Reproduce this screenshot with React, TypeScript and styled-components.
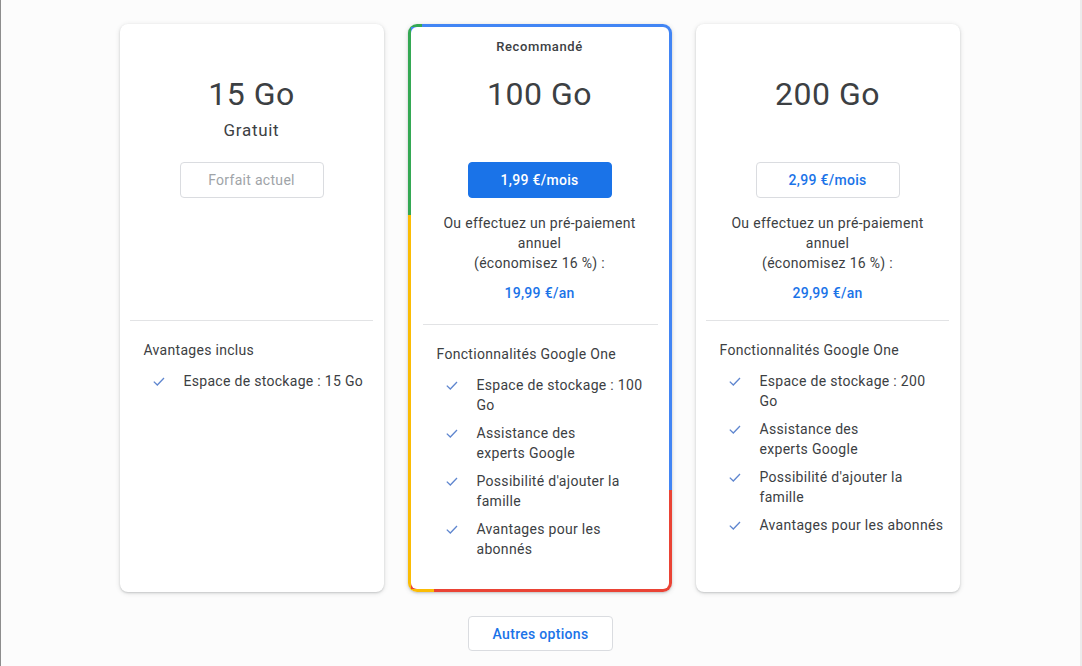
import React from "react";
import styled, { createGlobalStyle } from "styled-components";

const GlobalStyle = createGlobalStyle`
  html, body { margin: 0; padding: 0; background: #fcfcfc; }
  body {
    font-family: Roboto, "Liberation Sans", Arial, sans-serif;
    color: #3c4043;
    letter-spacing: 0.3px;
    -webkit-font-smoothing: antialiased;
  }
  * { box-sizing: border-box; }
`;

const Page = styled.main`
  min-height: 666px;
  border-left: 1px solid #8d8d8d;
  border-right: 2px solid #ececec;
  padding-top: 24px;
  display: flex;
  flex-direction: column;
  align-items: center;
`;

const Plans = styled.div`
  display: grid;
  grid-template-columns: repeat(3, 264px);
  column-gap: 24px;
  height: 568px;
  margin-right: 2px;
`;

const Card = styled.section<{ $featured?: boolean }>`
  display: flex;
  flex-direction: column;
  border-radius: ${(p) => (p.$featured ? 9 : 8)}px;
  box-shadow: 0 1px 2px rgba(60, 64, 67, 0.22), 0 1px 4px 1px rgba(60, 64, 67, 0.1);
  background: #fff;
  ${(p) =>
    p.$featured &&
    `
    border: 3px solid transparent;
    background:
      linear-gradient(#fff, #fff) padding-box,
      linear-gradient(#34a853, #34a853) left top / 14px 3px no-repeat border-box,
      linear-gradient(to bottom, #34a853 191px, #fbbc04 191px) left top / 3px 100% no-repeat border-box,
      linear-gradient(#fbbc04, #fbbc04) left bottom / 26px 3px no-repeat border-box,
      linear-gradient(to bottom, #4285f4 466px, #ea4335 466px) right top / 3px 100% no-repeat border-box,
      linear-gradient(to bottom, #4285f4 50%, #ea4335 50%) border-box;
  `}
`;

const Top = styled.div<{ $featured?: boolean }>`
  height: ${(p) => (p.$featured ? 297 : 296)}px;
  padding-top: ${(p) => (p.$featured ? 10 : 13)}px;
  display: flex;
  flex-direction: column;
  align-items: center;
  text-align: center;
`;

const Label = styled.div`
  height: 20px;
  line-height: 20px;
  font-size: 13px;
  font-weight: 500;
  letter-spacing: 0.6px;
  color: #3c4043;
`;

const Title = styled.h2`
  margin: 17px 0 0;
  font-size: 32px;
  line-height: 40px;
  font-weight: 400;
  letter-spacing: 0.5px;
  color: #3c4043;
`;

const Subtitle = styled.div`
  margin-top: 4px;
  height: 24px;
  line-height: 24px;
  font-size: 17px;
  letter-spacing: 0.7px;
  color: #3c4043;
`;

type Variant = "current" | "primary" | "outline";

const PriceButton = styled.button<{ $variant: Variant }>`
  margin-top: 20px;
  width: 144px;
  height: 36px;
  border-radius: 4px;
  font-family: inherit;
  font-size: 14px;
  letter-spacing: 0.3px;
  cursor: pointer;
  border: 1px solid ${(p) => (p.$variant === "primary" ? "#1a73e8" : "#dadce0")};
  background: ${(p) => (p.$variant === "primary" ? "#1a73e8" : "#fff")};
  color: ${(p) =>
    p.$variant === "primary" ? "#fff" : p.$variant === "outline" ? "#1a73e8" : "#a0a4a8"};
  font-weight: ${(p) => (p.$variant === "current" ? 400 : 500)};
`;

const Prepaid = styled.p`
  margin: 15px 0 0;
  font-size: 14px;
  line-height: 20px;
  color: #3c4043;
`;

const Annual = styled.div`
  margin-top: 10px;
  font-size: 14px;
  line-height: 20px;
  font-weight: 500;
  color: #1a73e8;
`;

const Divider = styled.hr<{ $featured?: boolean }>`
  margin: 0 11px 0 ${(p) => (p.$featured ? 12 : 10)}px;
  border: 0;
  height: 1px;
  background: #e2e3e5;
`;

const Bottom = styled.div<{ $featured?: boolean }>`
  padding: 19px 10px 0 ${(p) => (p.$featured ? 26 : 24)}px;
`;

const SectionTitle = styled.div`
  font-size: 14px;
  line-height: 20px;
  color: #3c4043;
`;

const FeatureList = styled.ul`
  list-style: none;
  margin: 11px 0 0;
  padding: 0 0 0 9px;
  display: flex;
  flex-direction: column;
  gap: 8px;
`;

const Feature = styled.li`
  display: flex;
  align-items: flex-start;
  gap: 19px;
  font-size: 14px;
  line-height: 20px;
  color: #3c4043;
  white-space: nowrap;
`;

const Check = styled.svg`
  flex: none;
  width: 12px;
  height: 20px;
`;

const MoreButton = styled.button`
  margin-top: 24px;
  width: 145px;
  height: 35px;
  border: 1px solid #dadce0;
  border-radius: 4px;
  background: #fff;
  color: #1a73e8;
  font-family: inherit;
  font-size: 14px;
  font-weight: 500;
  letter-spacing: 0.3px;
  cursor: pointer;
`;

const CheckIcon = () => (
  <Check viewBox="0 0 12 20" aria-hidden="true">
    <path d="M0.8 10.6 L4.3 14 L11 7" fill="none" stroke="#5f86cf" strokeWidth="1.3" />
  </Check>
);

type Plan = {
  label?: string;
  title: string;
  subtitle?: string;
  button: string;
  variant: Variant;
  annual?: string;
  section: string;
  features: string[][];
  featured?: boolean;
};

const plans: Plan[] = [
  {
    title: "15 Go",
    subtitle: "Gratuit",
    button: "Forfait actuel",
    variant: "current",
    section: "Avantages inclus",
    features: [["Espace de stockage : 15 Go"]],
  },
  {
    label: "Recommandé",
    title: "100 Go",
    button: "1,99 €/mois",
    variant: "primary",
    annual: "19,99 €/an",
    section: "Fonctionnalités Google One",
    featured: true,
    features: [
      ["Espace de stockage : 100", "Go"],
      ["Assistance des", "experts Google"],
      ["Possibilité d'ajouter la", "famille"],
      ["Avantages pour les", "abonnés"],
    ],
  },
  {
    title: "200 Go",
    button: "2,99 €/mois",
    variant: "outline",
    annual: "29,99 €/an",
    section: "Fonctionnalités Google One",
    features: [
      ["Espace de stockage : 200", "Go"],
      ["Assistance des", "experts Google"],
      ["Possibilité d'ajouter la", "famille"],
      ["Avantages pour les abonnés"],
    ],
  },
];

const PlanCard = ({ plan }: { plan: Plan }) => (
  <Card $featured={plan.featured}>
    <Top $featured={plan.featured}>
      <Label>{plan.label ?? ""}</Label>
      <Title>{plan.title}</Title>
      <Subtitle>{plan.subtitle ?? ""}</Subtitle>
      <PriceButton $variant={plan.variant}>{plan.button}</PriceButton>
      {plan.annual && (
        <>
          <Prepaid>
            Ou effectuez un pré-paiement
            <br />
            annuel
            <br />
            (économisez 16 %) :
          </Prepaid>
          <Annual>{plan.annual}</Annual>
        </>
      )}
    </Top>
    <Divider $featured={plan.featured} />
    <Bottom $featured={plan.featured}>
      <SectionTitle>{plan.section}</SectionTitle>
      <FeatureList>
        {plan.features.map((lines, i) => (
          <Feature key={i}>
            <CheckIcon />
            <span>
              {lines.map((l, j) => (
                <React.Fragment key={j}>
                  {j > 0 && <br />}
                  {l}
                </React.Fragment>
              ))}
            </span>
          </Feature>
        ))}
      </FeatureList>
    </Bottom>
  </Card>
);

export default function App() {
  return (
    <>
      <GlobalStyle />
      <Page>
        <Plans>
          {plans.map((p) => (
            <PlanCard key={p.title} plan={p} />
          ))}
        </Plans>
        <MoreButton>Autres options</MoreButton>
      </Page>
    </>
  );
}
